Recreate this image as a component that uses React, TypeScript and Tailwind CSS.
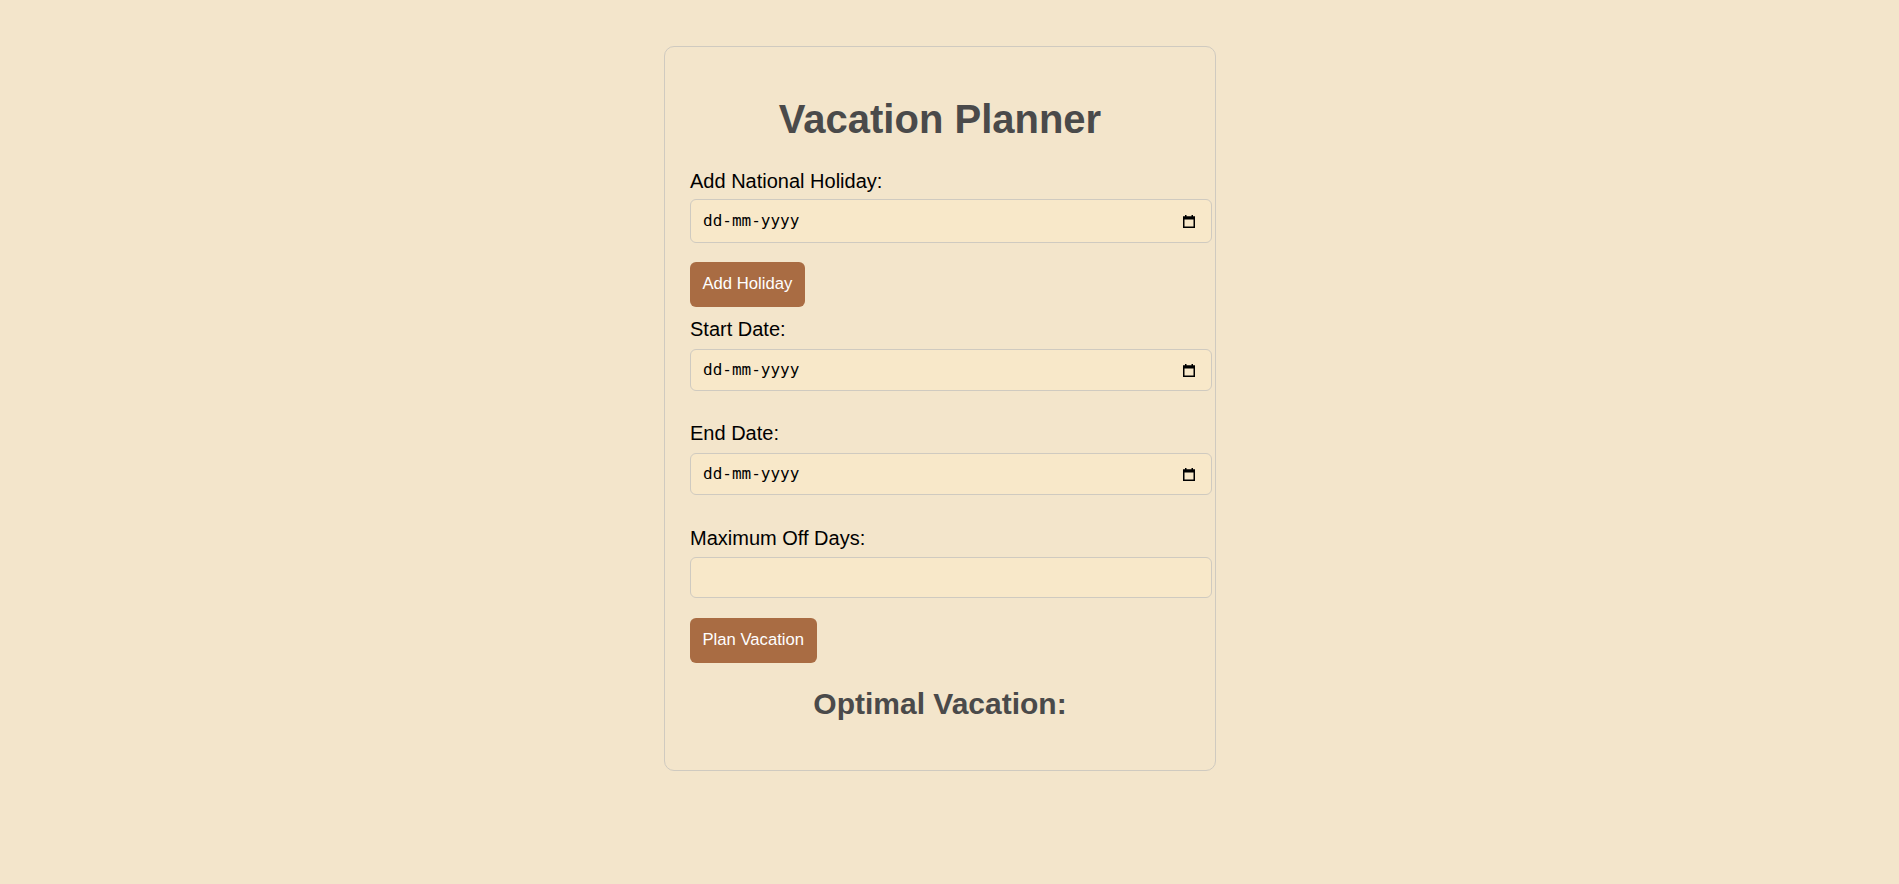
import React from 'react';

const CalendarIcon = () => (
  <svg width="14" height="15" viewBox="0 0 14 15" className="shrink-0">
    <rect x="1.75" y="3.25" width="10.5" height="10" fill="none" stroke="#000" strokeWidth="1.5" />
    <rect x="1" y="2.5" width="12" height="3" fill="#000" />
    <rect x="3" y="1" width="1.5" height="2" fill="#000" />
    <rect x="9.5" y="1" width="1.5" height="2" fill="#000" />
  </svg>
);

const DateField = ({ height }: { height: string }) => (
  <div
    className={`flex items-center justify-between w-[522px] ${height} pl-[12px] pr-[15px] bg-[#f8e8c9] border border-[#cfcac0] rounded-[6px]`}
  >
    <span className="text-[16px] text-black font-['DejaVu_Sans_Mono',monospace]">dd-mm-yyyy</span>
    <CalendarIcon />
  </div>
);

const Label = ({ children }: { children: React.ReactNode }) => (
  <label className="block text-[20px] leading-[23px] text-black">{children}</label>
);

const Button = ({ children }: { children: React.ReactNode }) => (
  <button className="h-[45px] px-[12.5px] pb-[2px] rounded-[6px] bg-[#a96c43] text-white text-[16.67px] leading-[19px]">
    {children}
  </button>
);

export default function App() {
  return (
    <div className="min-h-screen bg-[#f3e5cb] font-['Liberation_Sans',Arial,sans-serif] flex justify-center items-start pr-[19px] pt-[46px]">
      <div className="w-[552px] h-[725px] border border-[#cfcac0] rounded-[10px] px-[25px] pt-[49px] flex flex-col items-start">
        <h1 className="self-stretch text-center text-[40px] leading-[46px] font-bold text-[#4a4a4a]">
          Vacation Planner
        </h1>

        <div className="mt-[28px]">
          <Label>Add National Holiday:</Label>
        </div>
        <div className="mt-[6px]">
          <DateField height="h-[44px]" />
        </div>
        <div className="mt-[19px]">
          <Button>Add Holiday</Button>
        </div>

        <div className="mt-[11px]">
          <Label>Start Date:</Label>
        </div>
        <div className="mt-[8px]">
          <DateField height="h-[42px]" />
        </div>

        <div className="mt-[31px]">
          <Label>End Date:</Label>
        </div>
        <div className="mt-[8px]">
          <DateField height="h-[42px]" />
        </div>

        <div className="mt-[32px]">
          <Label>Maximum Off Days:</Label>
        </div>
        <input
          type="number"
          className="mt-[7px] w-[522px] h-[41px] px-[12px] bg-[#f8e8c9] border border-[#cfcac0] rounded-[6px] outline-none"
        />
        <div className="mt-[20px]">
          <Button>Plan Vacation</Button>
        </div>

        <h2 className="self-stretch mt-[23px] text-center text-[30px] leading-[35px] font-bold text-[#4a4a4a]">
          Optimal Vacation:
        </h2>
      </div>
    </div>
  );
}
